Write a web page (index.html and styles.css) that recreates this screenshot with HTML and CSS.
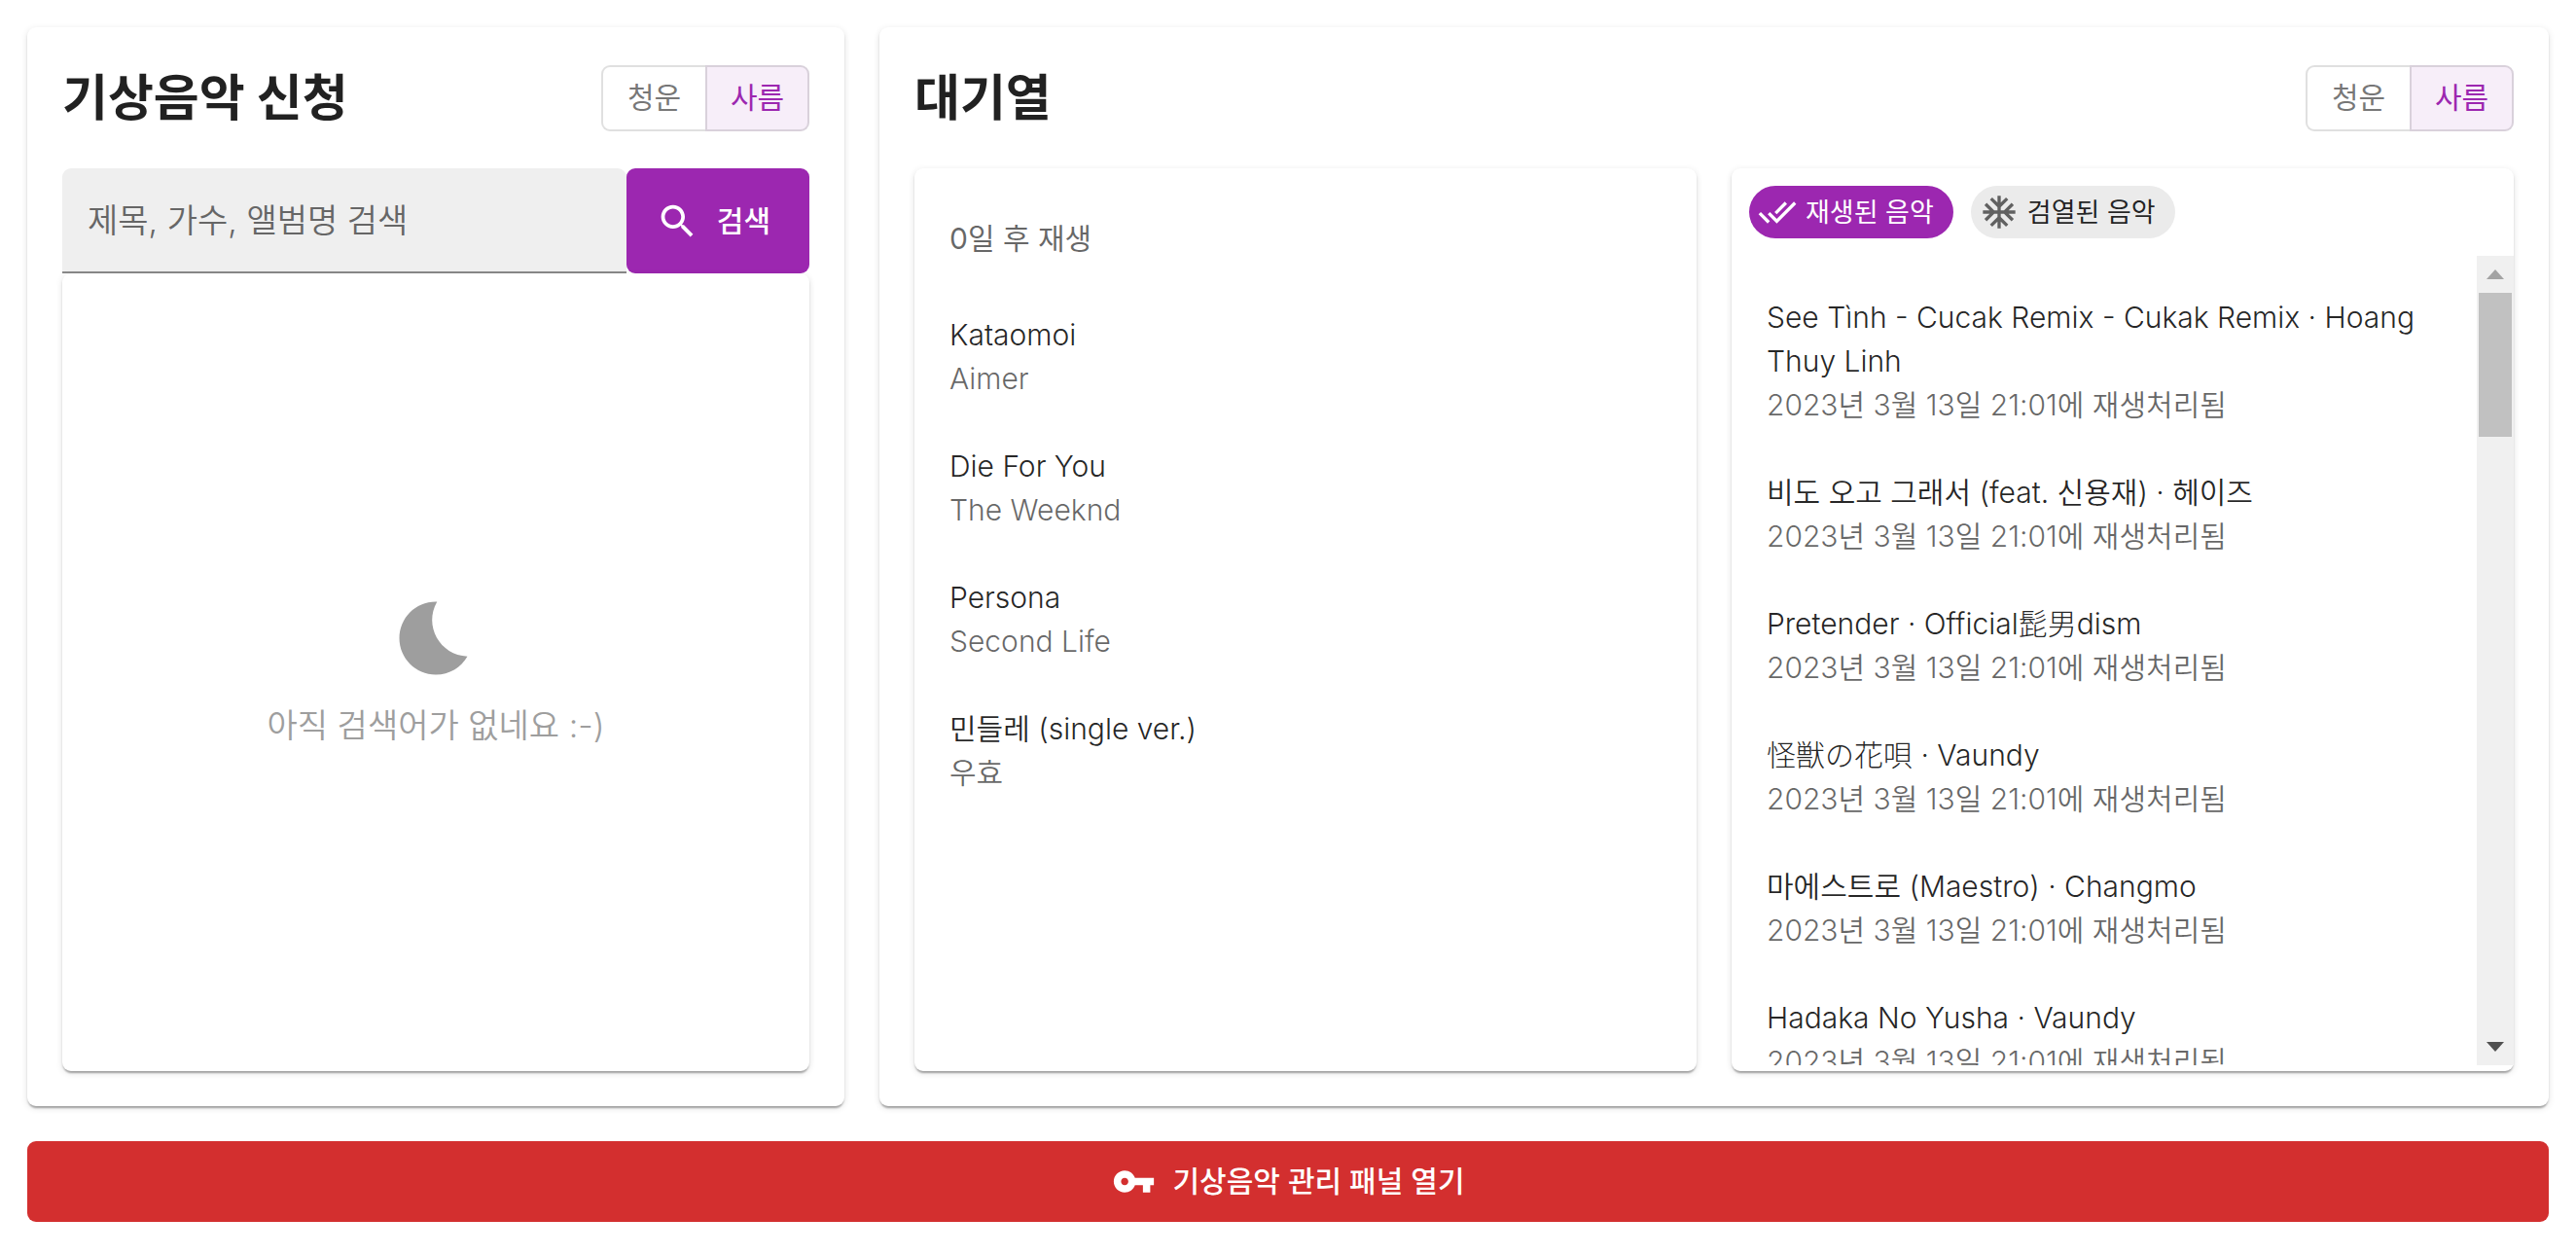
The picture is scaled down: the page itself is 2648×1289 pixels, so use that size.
FILE: index.html
```html
<!DOCTYPE html>
<html lang="ko">
<head>
<meta charset="utf-8">
<meta name="viewport" content="width=device-width, initial-scale=1">
<title>기상음악</title>
<link rel="stylesheet" href="styles.css">
</head>
<body>
<main class="page">
  <div class="panels">
    <section class="card panel panel-request">
      <header class="panel-header">
        <h1 class="panel-title">기상음악 신청</h1>
        <div class="toggle" role="group" aria-label="신청 기숙사">
          <button type="button" class="toggle-button" aria-pressed="false">청운</button>
          <button type="button" class="toggle-button selected" aria-pressed="true">사름</button>
        </div>
      </header>
      <form class="search">
        <input class="search-input" type="text" aria-label="제목, 가수, 앨범명 검색" placeholder="제목, 가수, 앨범명 검색">
        <button class="search-button" type="button">
          <svg class="icon" viewBox="0 0 24 24" aria-hidden="true"><path d="M15.5 14h-.79l-.28-.27C15.41 12.59 16 11.11 16 9.5 16 5.91 13.09 3 9.5 3S3 5.91 3 9.5 5.91 16 9.5 16c1.61 0 3.09-.59 4.23-1.57l.27.28v.79l5 4.99L20.49 19l-4.99-5zm-6 0C7.01 14 5 11.99 5 9.5S7.01 5 9.5 5 14 7.01 14 9.5 11.99 14 9.5 14z"/></svg>
          검색
        </button>
      </form>
      <div class="card empty">
        <svg class="icon-moon" viewBox="0 0 24 24" aria-hidden="true"><path d="M12.34 2.02C6.59 1.82 2 6.42 2 12c0 5.52 4.48 10 10 10 3.71 0 6.93-2.02 8.66-5.02-7.51-.25-12.09-8.43-8.32-14.96z"/></svg>
        <p class="empty-text">아직 검색어가 없네요 :-)</p>
      </div>
    </section>

    <section class="card panel panel-queue">
      <header class="panel-header">
        <h1 class="panel-title">대기열</h1>
        <div class="toggle" role="group" aria-label="대기열 기숙사">
          <button type="button" class="toggle-button" aria-pressed="false">청운</button>
          <button type="button" class="toggle-button selected" aria-pressed="true">사름</button>
        </div>
      </header>
      <div class="queue">
        <div class="card queue-card">
          <h2 class="list-heading">0일 후 재생</h2>
          <ul class="list">
            <li class="item"><p>Kataomoi</p><p class="sub">Aimer</p></li>
            <li class="item"><p>Die For You</p><p class="sub">The Weeknd</p></li>
            <li class="item"><p>Persona</p><p class="sub">Second Life</p></li>
            <li class="item"><p>민들레 (single ver.)</p><p class="sub">우효</p></li>
          </ul>
        </div>
        <div class="card history-card">
          <div class="chips">
            <button type="button" class="chip chip-active">
              <svg class="icon-chip" viewBox="0 0 24 24" aria-hidden="true"><path d="m18 7-1.41-1.41-6.34 6.34 1.41 1.41L18 7zm4.24-1.41L11.66 16.17 7.48 12l-1.41 1.41L11.66 19l12-12-1.42-1.41zM.41 13.41 6 19l1.41-1.41L1.83 12 .41 13.41z"/></svg>
              재생된 음악
            </button>
            <button type="button" class="chip">
              <svg class="icon-chip" viewBox="0 0 24 24" aria-hidden="true"><path d="M22 11h-4.17l3.24-3.24-1.41-1.42L15 11h-2V9l4.66-4.66-1.42-1.41L13 6.17V2h-2v4.17L7.76 2.93 6.34 4.34 11 9v2H9L4.34 6.34 2.93 7.76 6.17 11H2v2h4.17l-3.24 3.24 1.41 1.42L9 13h2v2l-4.66 4.66 1.42 1.41L11 17.83V22h2v-4.17l3.24 3.24 1.42-1.41L13 15v-2h2l4.66 4.66 1.41-1.42L17.83 13H22z"/></svg>
              검열된 음악
            </button>
          </div>
          <div class="scroll">
            <ul class="list history">
              <li class="item"><p>See Tình - Cucak Remix - Cukak Remix · Hoang Thuy Linh</p><p class="sub">2023년 3월 13일 21:01에 재생처리됨</p></li>
              <li class="item"><p>비도 오고 그래서 (feat. 신용재) · 헤이즈</p><p class="sub">2023년 3월 13일 21:01에 재생처리됨</p></li>
              <li class="item"><p>Pretender · Official<span lang="ja">髭男</span>dism</p><p class="sub">2023년 3월 13일 21:01에 재생처리됨</p></li>
              <li class="item"><p><span lang="ja">怪獣の花唄</span> · Vaundy</p><p class="sub">2023년 3월 13일 21:01에 재생처리됨</p></li>
              <li class="item"><p>마에스트로 (Maestro) · Changmo</p><p class="sub">2023년 3월 13일 21:01에 재생처리됨</p></li>
              <li class="item"><p>Hadaka No Yusha · Vaundy</p><p class="sub">2023년 3월 13일 21:01에 재생처리됨</p></li>
            </ul>
            <div class="scrollbar" aria-hidden="true">
              <svg class="arrow arrow-up" viewBox="0 0 38 38"><path d="M10 24h18l-9-10z"/></svg>
              <div class="track"><div class="thumb"></div></div>
              <svg class="arrow" viewBox="0 0 38 38"><path d="M10 14h18l-9 10z"/></svg>
            </div>
          </div>
        </div>
      </div>
    </section>
  </div>
  <button type="button" class="admin-button">
    <svg class="icon" viewBox="0 0 24 24" aria-hidden="true"><path d="M12.65 10C11.83 7.67 9.61 6 7 6c-3.31 0-6 2.69-6 6s2.69 6 6 6c2.61 0 4.83-1.67 5.65-4H17v4h4v-4h2v-4H12.65zM7 14c-1.1 0-2-.9-2-2s.9-2 2-2 2 .9 2 2-.9 2-2 2z"/></svg>
    기상음악 관리 패널 열기
  </button>
</main>
</body>
</html>
```
FILE: styles.css
```css
*, *::before, *::after { box-sizing: border-box; }

body {
  margin: 0;
  background: #fff;
  color: rgba(0, 0, 0, .87);
  font-family: Inter, "Noto Sans CJK KR", sans-serif;
  font-size: 30px;
  font-weight: 350;
  line-height: 45px;
}

h1, h2, p, ul { margin: 0; padding: 0; }
ul { list-style: none; }
button, input { font: inherit; border: 0; margin: 0; }
button { cursor: pointer; }
svg { display: block; flex: none; fill: currentColor; }
span[lang="ja"] {
  font-family: "Noto Sans CJK JP", sans-serif;
  font-weight: 300;
  line-height: 1;
}

.page {
  display: flex;
  flex-direction: column;
  gap: 36px;
  height: 100vh;
  padding: 28px 28px 33px;
}

.panels {
  display: grid;
  grid-template-columns: repeat(12, minmax(0, 1fr));
  grid-template-rows: minmax(0, 1fr);
  gap: 36px;
  flex: 1;
  min-height: 0;
}

.card {
  background: #fff;
  border-radius: 9px;
  box-shadow: 0 4px 2px -2px rgba(0, 0, 0, .2), 0 2px 2px rgba(0, 0, 0, .14), 0 2px 7px rgba(0, 0, 0, .12);
}

.panel {
  display: flex;
  flex-direction: column;
  padding: 36px;
  min-height: 0;
}
.panel-request { grid-column: span 4; }
.panel-queue { grid-column: span 8; }

.panel-header {
  display: flex;
  align-items: center;
  justify-content: space-between;
  height: 73px;
  margin-bottom: 36px;
}
.panel-title {
  font-size: 51px;
  font-weight: 700;
  line-height: 72px;
}

.toggle { display: flex; }
.toggle-button {
  width: 107px;
  height: 68px;
  padding: 0;
  border: 2px solid rgba(0, 0, 0, .12);
  border-radius: 9px 0 0 9px;
  background: none;
  color: rgba(0, 0, 0, .54);
  font-weight: 400;
}
.toggle-button:first-child { border-right: 0; }
.toggle-button:last-child { border-radius: 0 9px 9px 0; }
.toggle-button.selected {
  background: rgba(156, 39, 176, .08);
  color: #9c27b0;
}

.search { display: flex; height: 108px; }
.search-input {
  flex: 1;
  min-width: 0;
  padding: 0 26px;
  border-bottom: 2px solid #8a8a8a;
  border-radius: 9px 9px 0 0;
  background: #efefef;
  font-size: 34px;
}
.search-input::placeholder { color: #666; opacity: 1; }
.search-button {
  display: flex;
  align-items: center;
  gap: 18px;
  padding: 0 40px 0 30px;
  border-radius: 9px;
  background: #9c27b0;
  color: #fff;
  font-weight: 500;
}
.icon { width: 45px; height: 45px; }

.empty {
  display: flex;
  flex-direction: column;
  align-items: center;
  justify-content: center;
  gap: 18px;
  flex: 1;
  padding-top: 2px;
  color: #9e9e9e;
}
.icon-moon { width: 90px; height: 90px; }
.empty-text { font-size: 34px; line-height: 54px; }

.queue {
  display: grid;
  grid-template-columns: repeat(2, minmax(0, 1fr));
  grid-template-rows: minmax(0, 1fr);
  gap: 36px;
  flex: 1;
  min-height: 0;
}
.queue-card { padding: 18px 0; }
.list-heading {
  padding: 0 36px;
  color: rgba(0, 0, 0, .6);
  font-size: 30px;
  font-weight: 400;
  line-height: 108px;
}
.item { padding: 23px 36px 22px; }
.sub { color: rgba(0, 0, 0, .6); }

.history-card {
  display: flex;
  flex-direction: column;
  padding-bottom: 6px;
}
.chips { display: flex; gap: 18px; padding: 18px; }
.chip {
  display: flex;
  align-items: center;
  gap: 9px;
  height: 54px;
  padding: 0 20px 0 9px;
  border-radius: 27px;
  background: #ebebeb;
  color: rgba(0, 0, 0, .87);
  font-size: 27px;
  font-weight: 400;
}
.icon-chip { width: 40px; height: 40px; color: #616161; }
.chip-active { background: #9c27b0; color: #fff; }
.chip-active .icon-chip { color: #fff; }

.scroll { display: flex; flex: 1; min-height: 0; }
.history {
  flex: 1;
  min-width: 0;
  padding: 18px 0;
  overflow-y: auto;
  scrollbar-width: none;
}
.scrollbar {
  display: flex;
  flex-direction: column;
  width: 38px;
  background: #f0f0f0;
  color: #505050;
}
.arrow { width: 38px; height: 38px; }
.arrow-up { color: #a3a3a3; }
.track { flex: 1; padding: 0 2px; }
.thumb { height: 148px; background: #c1c1c1; }

.admin-button {
  display: flex;
  align-items: center;
  justify-content: center;
  gap: 18px;
  height: 83px;
  flex: none;
  border-radius: 9px;
  background: #d32f2f;
  color: #fff;
  font-weight: 500;
}
```
